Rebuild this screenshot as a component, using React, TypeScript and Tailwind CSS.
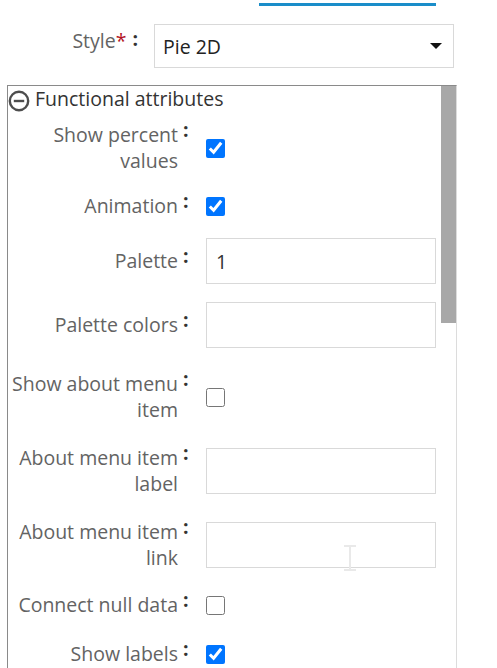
import React from "react";

type Row =
  | { kind: "check"; lines: string[]; checked: boolean; mt: string }
  | { kind: "text"; lines: string[]; value: string; mt: string; cursor?: boolean };

const rows: Row[] = [
  { kind: "check", lines: ["Show percent", "values"], checked: true, mt: "mt-[10px]" },
  { kind: "check", lines: ["Animation"], checked: true, mt: "mt-[19px]" },
  { kind: "text", lines: ["Palette"], value: "1", mt: "mt-[19px]" },
  { kind: "text", lines: ["Palette colors"], value: "", mt: "mt-[18px]" },
  { kind: "check", lines: ["Show about menu", "item"], checked: false, mt: "mt-[23px]" },
  { kind: "text", lines: ["About menu item", "label"], value: "", mt: "mt-[22px]" },
  { kind: "text", lines: ["About menu item", "link"], value: "", mt: "mt-[22px]", cursor: true },
  { kind: "check", lines: ["Connect null data"], checked: false, mt: "mt-[21px]" },
  { kind: "check", lines: ["Show labels"], checked: true, mt: "mt-[23px]" },
];

function MinusCircle() {
  return (
    <svg width="22" height="22" viewBox="0 0 22 22" className="shrink-0 mt-[4px]">
      <circle cx="11" cy="11" r="9.2" fill="none" stroke="#4d4d4d" strokeWidth="2.4" />
      <line x1="5.8" y1="11" x2="16.2" y2="11" stroke="#4d4d4d" strokeWidth="2.4" />
    </svg>
  );
}

// faint text cursor left over the link input in the screenshot
function IBeam() {
  return (
    <svg
      width="14"
      height="26"
      viewBox="0 0 14 26"
      className="absolute left-[137px] top-[23px] pointer-events-none"
    >
      <path d="M1 1 H13 M7 1 V25 M1 25 H13" stroke="#e9e9e9" strokeWidth="2" fill="none" />
    </svg>
  );
}

function Colon({ className = "" }: { className?: string }) {
  return <span className={`font-bold text-[#333] leading-[26px] ${className}`}>:</span>;
}

function FieldRow({ row }: { row: Row }) {
  return (
    <div className={`flex items-center ${row.mt}`}>
      <div className="flex items-start">
        <div className="w-[170px] text-right text-[#636363] leading-[26px]">
          {row.lines.map((l, i) => (
            <div key={i}>{l}</div>
          ))}
        </div>
        <div className="w-[28px] pl-[5px]">
          <Colon className="block -mt-[5px]" />
        </div>
      </div>
      {row.kind === "check" ? (
        <input type="checkbox" defaultChecked={row.checked} className="m-0 w-[19px] h-[19px]" />
      ) : (
        <div className="relative">
          <input
            type="text"
            defaultValue={row.value}
            className="block w-[230px] h-[46px] border border-[#d9d9d9] pl-[9px] text-[#333] outline-none"
          />
          {row.cursor && <IBeam />}
        </div>
      )}
    </div>
  );
}

export default function App() {
  return (
    <div
      className="w-[497px] h-[668px] overflow-hidden bg-white text-[19.5px]"
      style={{ fontFamily: '"Open Sans", "Noto Sans", sans-serif' }}
    >
      <div className="ml-[259px] mt-[3px] w-[177px] h-[3px] bg-[#1a8dc9]" />

      <div className="flex items-start mt-[18px]">
        <div className="w-[154px] flex items-start justify-end pr-[16px] mt-[4px] leading-[26px]">
          <span className="text-[#636363]">Style</span>
          <span className="text-[#b3141f]">*</span>
          <Colon className="ml-[6px] -mt-[2px]" />
        </div>
        <div className="w-[300px] h-[44px] border border-[#d9d9d9] flex items-center justify-between pl-[8px] pr-[11px] text-[#222]">
          <span className="mt-[2px]">Pie 2D</span>
          <svg width="12" height="6" viewBox="0 0 12 6">
            <path d="M0 0 L12 0 L6 6 Z" fill="#111" />
          </svg>
        </div>
      </div>

      <div className="ml-[7px] mt-[17px] w-[450px] h-[600px] border-t border-l border-r border-t-[#8a8a8a] border-l-[#8a8a8a] border-r-[#dcdcdc] flex">
        <div className="flex-1 min-w-0">
          <div className="flex items-start h-[26px] gap-[5px] text-[#333]">
            <MinusCircle />
            <span className="leading-[26px]">Functional attributes</span>
          </div>
          {rows.map((r) => (
            <FieldRow key={r.lines.join(" ")} row={r} />
          ))}
        </div>
        <div className="w-[15px] shrink-0">
          <div className="h-[237px] bg-[#a8a8a8]" />
        </div>
      </div>
    </div>
  );
}
